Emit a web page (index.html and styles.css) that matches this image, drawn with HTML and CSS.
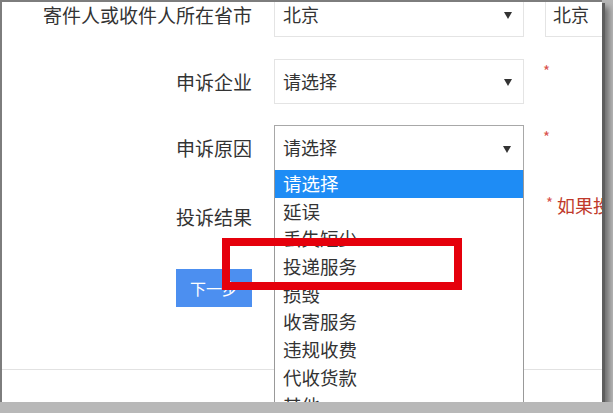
FILE: index.html
```html
<!DOCTYPE html>
<html lang="zh-CN">
<head>
  <meta charset="UTF-8" />
  <meta name="viewport" content="width=device-width, initial-scale=1.0"/>
  <title>申诉</title>
  <link rel="stylesheet" href="styles.css">
</head>
<body>

  <div class="page">
    <div class="form">

      <div class="row row-1">
        <div class="label">寄件人或收件人所在省市</div>
        <div class="select"><span>北京</span><i class="arrow"></i></div>
        <div class="select select-side"><span>北京</span></div>
      </div>

      <div class="row row-2">
        <div class="label">申诉企业</div>
        <div class="select"><span>请选择</span><i class="arrow"></i></div>
        <div class="star">*</div>
      </div>

      <div class="row row-3">
        <div class="label">申诉原因</div>
        <div class="select open">
          <span>请选择</span><i class="arrow"></i>
          <!-- opened dropdown list -->
          <ul class="options">
            <li class="active">请选择</li>
            <li>延误</li>
            <li>丢失短少</li>
            <li>投递服务</li>
            <li>损毁</li>
            <li>收寄服务</li>
            <li>违规收费</li>
            <li>代收货款</li>
            <li>其他</li>
          </ul>
        </div>
        <div class="star">*</div>
      </div>

      <div class="row row-4">
        <div class="label">投诉结果</div>
        <div></div>
        <div class="hint"><span class="hint-star">*</span> 如果投诉结果不满意</div>
      </div>

      <div class="row row-5">
        <div class="label"><button class="next-btn">下一步</button></div>
      </div>
    </div>

    <div class="footer-line"></div>

    <!-- red annotation box -->
    <div class="mark"></div>
  </div>

</body>
</html>
```

FILE: styles.css
```css
body {
  margin: 0;
  background: #b8b8b8;
  font-family: "Noto Sans CJK SC", "Microsoft YaHei", sans-serif;
  color: #333;
  overflow: hidden;
}

.page {
  position: relative;
  width: 600px;
  height: 400px;
  background: #fff;
  border-top: 2px solid #7d7d7d;
  border-left: 2px solid #7d7d7d;
  box-shadow: 3px 3px 0 #5e5e5e, 7px 7px 6px #6e6e6e;
  overflow: hidden;
}

.form {
  margin-top: -10px;
}

.row {
  display: grid;
  grid-template-columns: 250px 250px 1fr;
  column-gap: 22px;
  align-items: center;
}

.row-1 { margin-bottom: 22px; }
.row-2 { margin-bottom: 21px; }
.row-3 { margin-bottom: 26px; }
.row-4 { height: 40px; margin-bottom: 32px; }

.label {
  text-align: right;
  font-size: 19px;
  line-height: 24px;
  color: #333;
}

.select {
  position: relative;
  box-sizing: border-box;
  height: 45px;
  border: 1px solid #e4e4e4;
  padding: 0 8px;
  font-size: 18px;
  line-height: 43px;
  color: #333;
}

.select-side {
  margin-left: -1px;
  width: 80px;
  padding-left: 7px;
}

.arrow {
  position: absolute;
  right: 11px;
  top: 19px;
  width: 0;
  height: 0;
  border-left: 4px solid transparent;
  border-right: 4px solid transparent;
  border-top: 7px solid #333;
}

.star {
  align-self: start;
  margin-left: -3px;
  margin-top: 4px;
  font-size: 15px;
  line-height: 16px;
  color: #d9534f;
}

.open {
  border-color: #a8a8a8;
  height: 46px;
}

.open .arrow {
  right: 12px;
  top: 20px;
}

.options {
  position: absolute;
  left: -1px;
  top: 100%;
  width: 250px;
  margin: 0;
  padding: 0;
  list-style: none;
  background: #fff;
  border-left: 1px solid #999;
  border-right: 1px solid #999;
  box-sizing: border-box;
  z-index: 5;
}

.options li {
  height: 27.7px;
  line-height: 27.7px;
  padding-left: 8px;
  font-size: 18.5px;
  color: #333;
}

.options li.active {
  background: #1e8cf5;
  color: #fff;
}

.hint {
  align-self: start;
  font-size: 18px;
  line-height: 22px;
  color: #c0392b;
  white-space: nowrap;
  margin-top: -5px;
}

.hint-star {
  font-size: 15px;
  vertical-align: 4px;
  color: #d9534f;
}

.next-btn {
  width: 76px;
  height: 38px;
  border: none;
  background: #4c8ff0;
  color: #fff;
  font-family: inherit;
  font-size: 16px;
  padding: 0;
}

.footer-line {
  margin-top: 62px;
  height: 1px;
  background: #e2e2e2;
}

.mark {
  position: absolute;
  left: 220px;
  top: 236px;
  width: 240px;
  height: 52px;
  box-sizing: border-box;
  border: 8px solid #e5000c;
  z-index: 10;
}
```
